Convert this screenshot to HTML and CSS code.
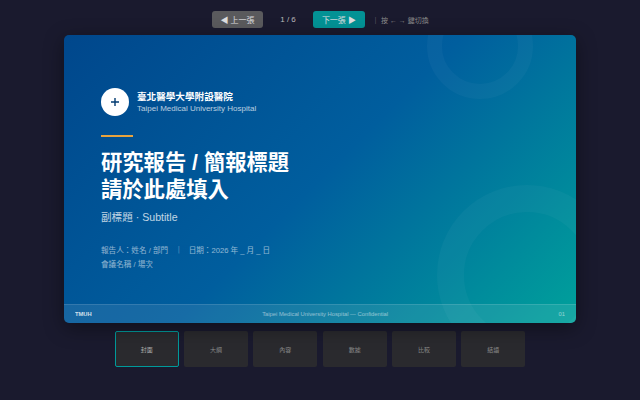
FILE: index.html
```html
<!DOCTYPE html>
<html lang="zh-Hant">
<head>
    <meta charset="UTF-8">
    <title>TMUH Slides</title>
    <link rel="stylesheet" href="styles.css">
</head>
<body>
    <div class="toolbar">
        <button class="nav-btn prev">◀ 上一張</button>
        <span class="counter">1 / 6</span>
        <button class="nav-btn next">下一張 ▶</button>
        <span class="hint">｜ 按 ← → 鍵切換</span>
    </div>

    <div class="slide">
        <div class="ring ring-top"></div>
        <div class="ring ring-bottom"></div>

        <div class="slide-body">
            <div class="brand">
                <div class="logo">
                    <svg width="10" height="10" viewBox="0 0 10 10">
                        <path d="M5 1v8M1 5h8" stroke="#003a70" stroke-width="1.4" fill="none"/>
                    </svg>
                </div>
                <div>
                    <div class="brand-zh">臺北醫學大學附設醫院</div>
                    <div class="brand-en">Taipei Medical University Hospital</div>
                </div>
            </div>
            <div class="accent"></div>
            <h1 class="title">研究報告 / 簡報標題<br>請於此處填入</h1>
            <div class="subtitle">副標題 · Subtitle</div>
            <div class="meta">
                <div>報告人：姓名 / 部門<span class="meta-sep">｜</span>日期：2026 年 _ 月 _ 日</div>
                <div>會議名稱 / 場次</div>
            </div>
        </div>

        <div class="slide-footer">
            <span class="footer-org">TMUH</span>
            <span class="footer-note">Taipei Medical University Hospital — Confidential</span>
            <span class="footer-page">01</span>
        </div>
    </div>

    <div class="thumbs">
        <div class="thumb active">封面</div>
        <div class="thumb">大綱</div>
        <div class="thumb">內容</div>
        <div class="thumb">數據</div>
        <div class="thumb">比較</div>
        <div class="thumb">結語</div>
    </div>
</body>
</html>
```

FILE: styles.css
```css
body {
    margin: 0;
    width: 640px;
    height: 400px;
    overflow: hidden;
    background-color: #1a1a2e;
    font-family: "Liberation Sans", "Noto Sans CJK TC", sans-serif;
    display: flex;
    flex-direction: column;
    align-items: center;
}

.toolbar {
    box-sizing: border-box;
    width: 512px;
    height: 17px;
    margin-top: 11px;
    margin-bottom: 7px;
    padding-left: 148px;
    display: flex;
    align-items: center;
    font-size: 8px;
}

.nav-btn {
    height: 17px;
    padding: 0;
    border: none;
    border-radius: 3px;
    color: white;
    font-family: inherit;
    font-size: 8px;
    opacity: 0.85;
}

.nav-btn.prev {
    width: 51px;
    background-color: #666;
}

.nav-btn.next {
    width: 52px;
    background-color: #00a8a8;
}

.counter {
    width: 50px;
    text-align: center;
    color: #bbb;
}

.hint {
    margin-left: 7px;
    color: #888;
    font-size: 7px;
}

.slide {
    position: relative;
    width: 512px;
    height: 288px;
    flex-shrink: 0;
    border-radius: 5px;
    overflow: hidden;
    background: linear-gradient(135deg, #00478c 0%, #005e9e 50%, #00a19b 100%);
    box-shadow: 0 5px 20px rgba(0,0,0,0.4);
    color: white;
    display: flex;
    flex-direction: column;
}

.ring {
    position: absolute;
    border-radius: 50%;
    box-sizing: border-box;
    border-style: solid;
    border-color: rgba(255,255,255,0.03);
}

.ring-top {
    width: 106px;
    height: 106px;
    left: 363px;
    top: -42px;
    border-width: 15px;
}

.ring-bottom {
    width: 180px;
    height: 180px;
    left: 373px;
    top: 150px;
    border-width: 27px;
}

.slide-body {
    position: relative;
    flex: 1;
    padding: 53px 37px 0;
}

.brand {
    display: flex;
    align-items: center;
    gap: 8px;
}

.logo {
    width: 28px;
    height: 28px;
    border-radius: 50%;
    background-color: white;
    display: flex;
    align-items: center;
    justify-content: center;
}

.brand-zh {
    font-size: 9.6px;
    font-weight: bold;
    line-height: 13px;
}

.brand-en {
    font-size: 8px;
    line-height: 12px;
    opacity: 0.7;
}

.accent {
    width: 32px;
    height: 2px;
    margin-top: 19px;
    background-color: #e8a33d;
}

.title {
    margin: 13px 0 0;
    font-size: 21.3px;
    line-height: 27px;
    font-weight: bold;
}

.subtitle {
    margin-top: 5px;
    font-size: 10.6px;
    line-height: 16px;
    opacity: 0.75;
}

.meta {
    margin-top: 19px;
    font-size: 7.6px;
    line-height: 14px;
    opacity: 0.55;
}

.meta-sep {
    margin: 0 6px 0 7px;
}

.slide-footer {
    position: relative;
    height: 19px;
    padding: 0 11px;
    background-color: rgba(255,255,255,0.09);
    border-top: 1px solid rgba(255,255,255,0.12);
    box-sizing: border-box;
    display: flex;
    align-items: center;
    justify-content: space-between;
    font-size: 5.8px;
}

.footer-org {
    font-weight: bold;
    opacity: 0.8;
}

.footer-note,
.footer-page {
    opacity: 0.5;
}

.thumbs {
    margin-top: 8px;
    display: flex;
    gap: 5.33px;
}

.thumb {
    width: 64px;
    height: 36px;
    border-radius: 2px;
    box-sizing: border-box;
    background-color: #2a2a2e;
    color: #888;
    font-size: 6px;
    display: flex;
    align-items: center;
    justify-content: center;
}

.thumb.active {
    border: 1px solid #009a9a;
    color: #aaa;
}
```
